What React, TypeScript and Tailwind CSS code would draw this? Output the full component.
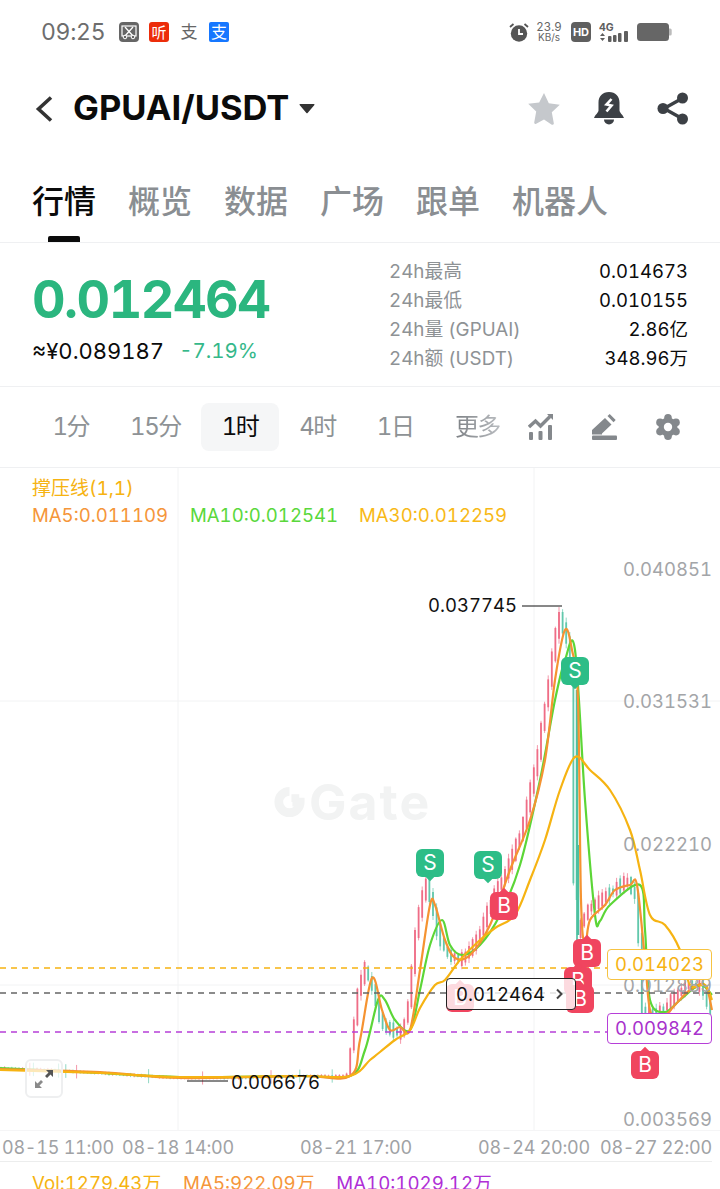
const FONT = "font-['Inter','Noto_Sans_CJK_SC',sans-serif] tabular-nums";

type Pt = [number, number];

// price path of the last candles, x and y in page pixels
const PRICE: Pt[] = [
  [0, 1068], [50, 1070], [100, 1073], [180, 1078], [240, 1078], [300, 1076], [350, 1076],
  [355, 1040], [362, 985], [368, 968], [376, 990], [385, 1025], [395, 1030], [405, 1035],
  [412, 1000], [420, 920], [430, 880], [440, 930], [450, 955], [465, 960], [480, 940],
  [495, 900], [510, 870], [525, 830], [540, 760], [552, 680], [562, 612], [570, 640],
  [575, 680], [577, 880], [580, 935], [590, 910], [610, 895], [630, 880], [640, 900],
  [645, 1010], [660, 1015], [690, 985], [705, 985], [712, 1010],
];

const MA5: Pt[] = [
  [0, 1069], [100, 1072], [180, 1078], [300, 1076], [350, 1076], [360, 1040], [372, 978], [382, 1010],
  [390, 1030], [400, 1027], [410, 1030], [420, 970], [430, 905], [435, 905], [445, 940], [455, 958],
  [470, 955], [490, 925], [510, 870], [530, 820], [545, 760], [555, 680], [565, 630], [572, 650],
  [578, 700], [581, 900], [585, 945], [590, 920], [605, 905], [615, 890], [630, 885], [637, 885],
  [645, 960], [650, 1010], [660, 1020], [675, 1005], [690, 990], [705, 985], [712, 1010],
];

const MA10: Pt[] = [
  [0, 1068], [100, 1073], [180, 1077], [300, 1076], [350, 1076], [365, 1050], [378, 1000], [385, 1000],
  [395, 1020], [410, 1030], [420, 990], [430, 945], [442, 920], [450, 945], [462, 955], [480, 945],
  [500, 915], [520, 865], [540, 780], [555, 700], [565, 660], [575, 650], [585, 800], [595, 915],
  [600, 921], [610, 905], [640, 885], [645, 930], [650, 1000], [665, 1012], [680, 1000], [700, 985], [712, 995],
];

const MA30: Pt[] = [
  [0, 1070], [100, 1073], [180, 1077], [300, 1076], [350, 1076], [370, 1060], [380, 1052], [395, 1040],
  [410, 1030], [420, 1008], [435, 985], [445, 980], [460, 960], [480, 940], [495, 928], [515, 915],
  [530, 880], [545, 840], [560, 790], [575, 757], [590, 770], [610, 790], [630, 830], [640, 870],
  [650, 915], [665, 925], [680, 950], [690, 985], [705, 985], [712, 1000],
];

function smooth(points: Pt[]) {
  let d = `M${points[0][0]} ${points[0][1]}`;
  for (let i = 0; i < points.length - 1; i++) {
    const p0 = points[Math.max(i - 1, 0)];
    const p1 = points[i];
    const p2 = points[i + 1];
    const p3 = points[Math.min(i + 2, points.length - 1)];
    const c1x = p1[0] + (p2[0] - p0[0]) / 6;
    const c1y = p1[1] + (p2[1] - p0[1]) / 6;
    const c2x = p2[0] - (p3[0] - p1[0]) / 6;
    const c2y = p2[1] - (p3[1] - p1[1]) / 6;
    d += ` C${c1x.toFixed(1)} ${c1y.toFixed(1)} ${c2x.toFixed(1)} ${c2y.toFixed(1)} ${p2[0]} ${p2[1]}`;
  }
  return d;
}

function priceAt(x: number) {
  for (let i = 0; i < PRICE.length - 1; i++) {
    const [x0, y0] = PRICE[i];
    const [x1, y1] = PRICE[i + 1];
    if (x >= x0 && x <= x1) return y0 + ((y1 - y0) * (x - x0)) / (x1 - x0);
  }
  return PRICE[PRICE.length - 1][1];
}

// fixed pseudo random noise so the candles stay the same on every render
function noise(i: number) {
  const v = Math.sin(i * 12.9898) * 43758.5453;
  return v - Math.floor(v);
}

const CANDLES = Array.from({ length: 198 }, (_, i) => {
  const x = i * 3.6 + 1;
  const hot = x > 352;
  const now = priceAt(x);
  const next = priceAt(x + 3.6);
  const size = hot ? 3 + noise(i) * 11 : 0.5 + noise(i) * 1.5;
  const up = hot ? next < now + (noise(i + 500) - 0.5) * 12 : noise(i + 500) > 0.5;
  const top = Math.max(Math.min(now, next) - size / 2, 612);
  const bottom = Math.max(now, next) + size / 2;
  const wick = hot ? 1 + noise(i + 900) * 4 : noise(i + 900) > 0.9 ? 6 : 1;
  return { x, up, top, bottom, wick };
});

function Candles() {
  return (
    <g>
      {CANDLES.map((c) => (
        <g key={c.x} stroke={c.up ? "#ef6d86" : "#62c8ac"}>
          <line x1={c.x} x2={c.x} y1={Math.max(c.top - c.wick, 607)} y2={c.bottom + c.wick} strokeWidth={1} opacity={0.7} />
          <line x1={c.x} x2={c.x} y1={c.top} y2={c.bottom} strokeWidth={1.8} />
        </g>
      ))}
      {/* the long bars of the drop */}
      <line x1={577} x2={577} y1={690} y2={900} stroke="#4cc0a0" strokeWidth={2.5} />
      <line x1={578} x2={578} y1={845} y2={935} stroke="#4cc0a0" strokeWidth={2.5} />
    </g>
  );
}

function Marker({ kind, x, y, tail = "top" }: { kind: "S" | "B"; x: number; y: number; tail?: "top" | "bottom" }) {
  const bg = kind === "S" ? "bg-[#2dbd87]" : "bg-[#f0455f]";
  return (
    <div
      className={`absolute flex h-7 w-7 items-center justify-center rounded-md text-[21px] text-white ${bg}`}
      style={{ left: x - 14, top: y - 14 - 468 }}
    >
      {kind}
      {tail === "top" ? (
        <span className={`absolute -top-[3px] left-[11px] h-[6px] w-[6px] rotate-45 ${bg}`} />
      ) : (
        <span className={`absolute -bottom-[3px] left-[11px] h-[6px] w-[6px] rotate-45 ${bg}`} />
      )}
    </div>
  );
}

function ChartLabel({ text, x, y, className }: { text: string; x: number; y: number; className: string }) {
  return (
    <span className={`absolute leading-none ${className}`} style={{ left: x, top: y - 468 }}>
      {text}
    </span>
  );
}

function StatusBar() {
  return (
    <div className="flex h-[64px] items-center pl-[41px] pr-[48px] text-[#6d6d6d]">
      <span className="w-[64px] text-[23px] leading-none tracking-[-0.3px]">09:25</span>
      <div className="ml-[14px] flex items-center gap-[10px]">
        <svg width="20" height="20" viewBox="0 0 20 20">
          <rect width="20" height="20" rx="4" fill="#666" />
          <rect x="3" y="4" width="14" height="10" fill="none" stroke="#fff" strokeWidth="1.200" />
          <path d="M6 5l8 9M14 5l-8 9" fill="none" stroke="#fff" strokeWidth="1.300" />
          <circle cx="6" cy="15" r="1.800" fill="#666" stroke="#fff" />
          <circle cx="14" cy="15" r="1.800" fill="#666" stroke="#fff" />
        </svg>
        <span className="flex h-5 w-5 items-center justify-center rounded-[3px] bg-[#ec2d0a] text-[15px] leading-none text-white">听</span>
        <span className="flex h-5 w-5 items-center justify-center text-[17px] leading-none text-[#666]">支</span>
        <span className="flex h-5 w-5 items-center justify-center rounded-[2px] bg-[#1677ff] text-[16px] leading-none text-white">支</span>
      </div>
      <div className="ml-auto flex items-center">
        <svg width="20" height="20" viewBox="0 0 20 20">
          <circle cx="10" cy="11.500" r="8.200" fill="#555" />
          <path d="M10 7v5h4" fill="none" stroke="#fff" strokeWidth="1.800" />
          <path d="M1 5l3.500-3M19 5l-3.500-3" stroke="#555" strokeWidth="1.800" />
        </svg>
        <div className="ml-[8px] flex w-[24px] flex-col items-center text-[11.500px] leading-[10px] text-[#666]">
          <span>23.9</span>
          <span className="text-[10px]">KB/s</span>
        </div>
        <span className="ml-[10px] flex h-5 w-5 items-center justify-center rounded-[4px] bg-[#5f5f5f] text-[11px] font-bold leading-none text-white">HD</span>
        <svg className="ml-[8px]" width="32" height="20" viewBox="0 0 32 20">
          <text x="0" y="9" fontSize="10.500" fontWeight="700" fill="#5f5f5f">4G</text>
          <path d="M3.500 11l2.500 3h-5zM3.500 19l2.500-3h-5z" fill="#5f5f5f" />
          <rect x="9" y="14" width="3.500" height="6" rx="1" fill="#5f5f5f" />
          <rect x="14" y="13" width="3.500" height="7" rx="1" fill="#5f5f5f" />
          <rect x="19" y="11" width="3.500" height="9" rx="1" fill="#5f5f5f" />
          <rect x="25" y="9" width="4" height="11" rx="1" fill="#5f5f5f" />
        </svg>
        <svg className="ml-[6px]" width="35" height="18" viewBox="0 0 35 18">
          <rect width="32" height="18" rx="3.500" fill="#666" />
          <path d="M32 5.500h1.200a1.500 1.500 0 0 1 1.500 1.500v4a1.500 1.500 0 0 1-1.500 1.500H32z" fill="#bbb" />
        </svg>
      </div>
    </div>
  );
}

function Header() {
  return (
    <div className="flex h-[89px] items-center pl-[34px] pr-[31px]">
      <svg width="20" height="28" viewBox="0 0 20 28">
        <path d="M17 2.500L4.500 14 17 25.500" fill="none" stroke="#333" strokeWidth="3.600" />
      </svg>
      <span className="ml-[19px] text-[34.500px] font-bold leading-none text-[#0b0b0b]">GPUAI/USDT</span>
      <svg className="ml-[10px]" width="16" height="11" viewBox="0 0 16 11">
        <path d="M1 1h14a.6.6 0 0 1 .4 1L8.600 10a.8.8 0 0 1-1.200 0L.6 2A.6.6 0 0 1 1 1z" fill="#333" />
      </svg>
      <div className="ml-auto flex items-center gap-[33px]">
        <svg width="34" height="33" viewBox="0 0 34 33">
          <path
            d="M17 1l4.800 10.300 11 1.400-8 7.600 2 11a1.400 1.400 0 0 1-2 1.400L17 27.500l-7.800 4.300a1.400 1.400 0 0 1-2-1.400l2-11-8-7.600 11-1.400z"
            fill="#c5c8cc"
          />
        </svg>
        <svg width="30" height="33" viewBox="0 0 30 33">
          <path d="M15 0c6.500 0 10.500 4.600 10.500 10.500v8c0 2 3.500 4.500 4.500 7.500H0c1-3 4.500-5.500 4.500-7.500v-8C4.500 4.600 8.500 0 15 0z" fill="#3c4045" />
          <path d="M10 27.500h10a5 5 0 0 1-10 0z" fill="#3c4045" />
          <path d="M17.500 7l-5 5.500 5 1-5 6" fill="none" stroke="#fff" strokeWidth="2.600" />
        </svg>
        <svg width="32" height="33" viewBox="0 0 32 33">
          <path d="M25 6.500L7 16.500l18 10" fill="none" stroke="#3c4045" strokeWidth="3.400" />
          <circle cx="25.500" cy="6" r="5.500" fill="#3c4045" />
          <circle cx="6" cy="16.500" r="5.500" fill="#3c4045" />
          <circle cx="25.500" cy="27" r="5.500" fill="#3c4045" />
        </svg>
      </div>
    </div>
  );
}

function Tabs() {
  const items = ["概览", "数据", "广场", "跟单", "机器人"];
  return (
    <div className="relative flex h-[90px] items-start gap-[32px] border-b border-[#eff0f2] pl-[32px] pt-[26px] text-[32px] font-medium leading-[46px] text-[#8a8e92]">
      <span className="text-[#0b0b0b]">行情</span>
      {items.map((t) => (
        <span key={t}>{t}</span>
      ))}
      <span className="absolute bottom-0 left-[48px] h-[6px] w-[32px] rounded-t-[2px] bg-[#0b0b0b]" />
    </div>
  );
}

function Stats() {
  const rows = [
    ["24h最高", "0.014673"],
    ["24h最低", "0.010155"],
    ["24h量 (GPUAI)", "2.86亿"],
    ["24h额 (USDT)", "348.96万"],
  ];
  return (
    <div className="flex h-[144px] border-b border-[#eff0f2] pl-[32px] pr-[32px]">
      <div className="flex w-[357px] flex-col pt-[28px]">
        <span className="text-[52px] font-bold leading-[58px] tracking-[-1.500px] text-[#2bb67f]">0.012464</span>
        <div className="mt-[8px] flex items-center leading-[28px]">
          <span className="text-[22px] text-[#0b0b0b]">≈¥0.089187</span>
          <span className="ml-[15px] text-[20.500px] text-[#35b88a]">-7.19%</span>
        </div>
      </div>
      <div className="flex flex-1 flex-col pt-[14px] text-[18.800px] leading-[29px]">
        {rows.map(([k, v]) => (
          <div key={k} className="flex justify-between">
            <span className="text-[#8e9295]">{k}</span>
            <span className="text-[18.500px] text-[#0b0b0b]">{v}</span>
          </div>
        ))}
      </div>
    </div>
  );
}

function Intervals() {
  const items = ["1分", "15分", "1时", "4时", "1日"];
  return (
    <div className="flex h-[81px] items-center border-b border-[#eff0f2] pl-[32px] pr-[40px] text-[24px] tracking-[-1.500px] text-[#8e9295]">
      {items.map((t) => (
        <span
          key={t}
          className={`flex h-[48px] items-center rounded-lg px-[20.500px] ${t === "1时" ? "bg-[#f5f6f7] text-[#0b0b0b]" : ""}`}
        >
          {t}
        </span>
      ))}
      <span className="ml-[21px] bg-gradient-to-r from-[#7d8185] to-[#b9bcc0] bg-clip-text text-transparent">更多</span>
      <div className="ml-auto flex items-center gap-[39px]">
        <svg width="25" height="26" viewBox="0 0 25 26" fill="#84888c">
          <path d="M1 13l6.500-6 5 5 9.500-9.500" fill="none" stroke="#84888c" strokeWidth="3.400" />
          <path d="M19 0h6v6z" />
          <rect x="1" y="18" width="4" height="8" rx="1" />
          <rect x="10.500" y="17" width="4" height="9" rx="1" />
          <rect x="20" y="11" width="4" height="15" rx="1" />
        </svg>
        <svg width="25" height="26" viewBox="0 0 25 26" fill="#84888c">
          <path d="M0 16L13 4l6.500 6.500L10 19.500v1H0z" />
          <path d="M15.500 2l2.200-2 6 6-2.200 2.200z" />
          <rect x="0" y="21.500" width="25" height="4.500" rx="1" />
        </svg>
        <svg width="24" height="26" viewBox="0 0 24 26" fill="#84888c">
          <circle cx="12" cy="13" r="9.500" />
          <circle cx="12" cy="3.800" r="3.800" />
          <circle cx="12" cy="22.200" r="3.800" />
          <circle cx="4" cy="8.400" r="3.800" />
          <circle cx="20" cy="8.400" r="3.800" />
          <circle cx="4" cy="17.600" r="3.800" />
          <circle cx="20" cy="17.600" r="3.800" />
          <circle cx="12" cy="13" r="4.200" fill="#fff" />
        </svg>
      </div>
    </div>
  );
}

function Chart() {
  return (
    <div className="relative h-[663px] overflow-hidden border-b border-[#f5f5f6]">
      <svg className="absolute inset-0" width="720" height="663" viewBox="0 468 720 663">
        {/* grid */}
        <g stroke="#f2f3f4" strokeWidth="1">
          <line x1="178" x2="178" y1="468" y2="1131" />
          <line x1="534" x2="534" y1="468" y2="1131" />
          <line x1="0" x2="720" y1="701" y2="701" />
          <line x1="0" x2="720" y1="985" y2="985" />
        </g>
        <Candles />
        <path d={smooth(MA10)} fill="none" stroke="#5cd637" strokeWidth="2.200" />
        <path d={smooth(MA5)} fill="none" stroke="#f59331" strokeWidth="2.200" />
        <path d={smooth(MA30)} fill="none" stroke="#f6b312" strokeWidth="2.200" />
        {/* high and low leaders */}
        <path d="M522 606h40M187 1081h41" stroke="#111" strokeWidth="1" />
        {/* support, price and resistance levels */}
        <line x1="0" x2="607" y1="968" y2="968" stroke="#f6b312" strokeWidth="1.500" strokeDasharray="6 5" />
        <line x1="0" x2="720" y1="993" y2="993" stroke="#666" strokeWidth="1.500" strokeDasharray="6 5" />
        <line x1="0" x2="607" y1="1032" y2="1032" stroke="#b63fd8" strokeWidth="1.500" strokeDasharray="6 5" />
      </svg>

      {/* watermark */}
      <div className="absolute left-[272px] top-[312px] flex h-[44px] items-center gap-[2px] text-[#f2f3f3]">
        <svg width="35" height="36" viewBox="0 0 36 36">
          <path d="M18 7a11 11 0 1 0 11 11h-8" fill="none" stroke="#f2f3f3" strokeWidth="9" />
          <path d="M20 10h8v8h-8z" fill="#f2f3f3" />
        </svg>
        <span className="text-[50px] font-bold leading-none tracking-[2px]">Gate</span>
      </div>

      {/* legend */}
      <div className="absolute left-[32px] top-[7px] flex flex-col text-[18.600px] leading-[27px]">
        <span className="text-[19px] text-[#f6b312]">撑压线(1,1)</span>
        <div className="flex">
          <span className="w-[158px] text-[#f5963a]">MA5:0.011109</span>
          <span className="w-[169px] text-[#5ad83c]">MA10:0.012541</span>
          <span className="text-[#f8b917]">MA30:0.012259</span>
        </div>
      </div>

      {/* price scale */}
      <div className="text-[18.500px] text-[#a3a5a8]">
        <ChartLabel text="0.040851" x={623} y={560} className="" />
        <ChartLabel text="0.031531" x={623} y={692} className="" />
        <ChartLabel text="0.022210" x={623} y={835} className="" />
        <ChartLabel text="0.012889" x={623} y={976} className="" />
        <ChartLabel text="0.003569" x={623} y={1110} className="" />
      </div>

      <ChartLabel text="0.037745" x={428} y={596} className="text-[18.500px] text-[#111]" />
      <ChartLabel text="0.006676" x={231} y={1073} className="text-[18.500px] text-[#111]" />

      <Marker kind="S" x={430} y={863} tail="bottom" />
      <Marker kind="S" x={488} y={865} tail="bottom" />
      <Marker kind="S" x={575} y={671} tail="bottom" />
      <Marker kind="B" x={504} y={906} />
      <Marker kind="B" x={587} y={953} />
      <Marker kind="B" x={578} y={981} />
      <Marker kind="B" x={580} y={999} />
      <Marker kind="B" x={460} y={998} />
      <Marker kind="B" x={645} y={1065} />

      {/* latest price tag */}
      <div className="absolute left-[446px] top-[510px] flex h-[32px] w-[130px] items-center justify-between rounded-[4px] border border-[#222] bg-white/80 pl-[9px] pr-[11px] text-[18.500px] leading-none text-[#111]">
        0.012464
        <svg width="9" height="12" viewBox="0 0 9 12">
          <path d="M2 1.500l4.500 4.500L2 10.500" fill="none" stroke="#444" strokeWidth="2" />
        </svg>
      </div>

      {/* level tags on the right */}
      <div className="absolute left-[607px] top-[481px] flex h-[31px] w-[105px] items-center justify-center rounded-[4px] border border-[#f6c342] bg-white text-[18.500px] leading-none text-[#f6b312]">
        0.014023
      </div>
      <div className="absolute left-[607px] top-[545px] flex h-[31px] w-[105px] items-center justify-center rounded-[4px] border border-[#b63fd8] bg-white text-[18.500px] leading-none text-[#a832cc]">
        0.009842
      </div>

      {/* fullscreen toggle */}
      <div className="absolute left-[25px] top-[591px] flex h-[39px] w-[38px] items-center justify-center rounded-md border-2 border-[#eeeff0] bg-white/70">
        <svg width="20" height="20" viewBox="0 0 20 20">
          <path d="M19 1h-7l2.500 2.500-3.500 3.500 2 2 3.500-3.500L19 8z" fill="#555" />
          <path d="M1 19h7l-2.500-2.500 3.500-3.500-2-2-3.500 3.500L1 12z" fill="#8a8a8a" />
        </svg>
      </div>
    </div>
  );
}

function TimeAxis() {
  return (
    <div className="mr-[8px] flex h-[31px] items-center whitespace-nowrap border-b border-[#eceded] pl-[2px] pt-[2px] text-[18px] tracking-[-0.250px] text-[#a0a2a5]">
      <span className="w-[112px]">08-15 11:00</span>
      <span className="ml-[8px] w-[112px]">08-18 14:00</span>
      <span className="ml-[66px] w-[112px]">08-21 17:00</span>
      <span className="ml-[66px] w-[112px]">08-24 20:00</span>
      <span className="ml-[10px] w-[112px]">08-27 22:00</span>
    </div>
  );
}

function VolumeLegend() {
  return (
    <div className="flex pl-[32px] pt-[8px] text-[18.700px] leading-[27px]">
      <span className="text-[#f6b312]">Vol:1279.43万</span>
      <span className="ml-[22px] text-[#f5963a]">MA5:922.09万</span>
      <span className="ml-[22px] text-[#b02fd6]">MA10:1029.12万</span>
    </div>
  );
}

export default function App() {
  return (
    <div className={`${FONT} h-[1189px] w-[720px] overflow-hidden bg-white`}>
      <StatusBar />
      <Header />
      <Tabs />
      <Stats />
      <Intervals />
      <Chart />
      <TimeAxis />
      <VolumeLegend />
    </div>
  );
}
